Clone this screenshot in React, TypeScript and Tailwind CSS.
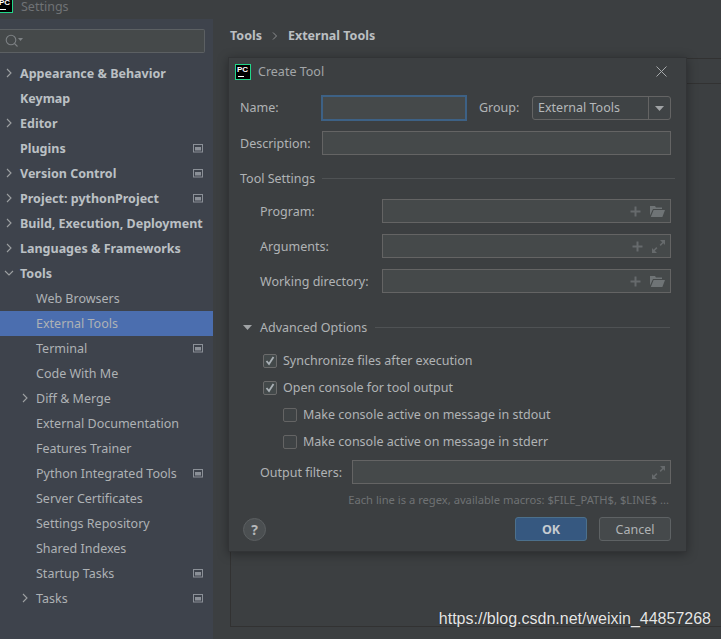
import type { ReactNode } from 'react'

const font = "font-['Noto_Sans','Open_Sans',sans-serif]"

type NavItem = {
  label: string
  bold?: boolean
  arrow?: boolean
  open?: boolean
  child?: boolean
  selected?: boolean
  project?: boolean
}

const navItems: NavItem[] = [
  { label: 'Appearance & Behavior', bold: true, arrow: true },
  { label: 'Keymap', bold: true },
  { label: 'Editor', bold: true, arrow: true },
  { label: 'Plugins', bold: true, project: true },
  { label: 'Version Control', bold: true, arrow: true, project: true },
  { label: 'Project: pythonProject', bold: true, arrow: true, project: true },
  { label: 'Build, Execution, Deployment', bold: true, arrow: true },
  { label: 'Languages & Frameworks', bold: true, arrow: true },
  { label: 'Tools', bold: true, arrow: true, open: true },
  { label: 'Web Browsers', child: true },
  { label: 'External Tools', child: true, selected: true },
  { label: 'Terminal', child: true, project: true },
  { label: 'Code With Me', child: true },
  { label: 'Diff & Merge', child: true, arrow: true },
  { label: 'External Documentation', child: true },
  { label: 'Features Trainer', child: true },
  { label: 'Python Integrated Tools', child: true, project: true },
  { label: 'Server Certificates', child: true },
  { label: 'Settings Repository', child: true },
  { label: 'Shared Indexes', child: true },
  { label: 'Startup Tasks', child: true, project: true },
  { label: 'Tasks', child: true, arrow: true, project: true },
]

const PcLogo = () => (
  <div className="relative h-4 w-4 shrink-0 border border-[#21d789] bg-black">
    <span className="absolute left-[1px] top-[0px] font-['Liberation_Sans',sans-serif] text-[8px] font-bold leading-[9px] text-white">
      PC
    </span>
    <div className="absolute bottom-[2px] left-[2px] h-[1px] w-[6px] bg-white" />
  </div>
)

const Chevron = ({ open }: { open?: boolean }) => (
  <svg width="10" height="10" viewBox="0 0 10 10" fill="none" stroke="#9da0a2" strokeWidth="1.1">
    <path d={open ? 'M1 3l4 4 4-4' : 'M3 1l4 4-4 4'} />
  </svg>
)

const ProjectIcon = () => (
  <svg width="10" height="9" viewBox="0 0 10 9" className="shrink-0">
    <rect x="0.5" y="0.5" width="9" height="7.5" fill="none" stroke="#8b9097" />
    <rect x="2" y="3" width="6" height="3.5" fill="#8b9097" />
  </svg>
)

const Plus = () => (
  <svg width="11" height="11" viewBox="0 0 11 11" fill="#666a6c">
    <rect x="4.5" y="0.5" width="2" height="10" />
    <rect x="0.5" y="4.5" width="10" height="2" />
  </svg>
)

const Folder = () => (
  <svg width="15" height="12" viewBox="0 0 15 12" fill="#6f7476">
    <path d="M0 1h5l1 1.5h6V4H3L0 10.5z" />
    <path d="M3.6 5H15l-2.6 7H0.8z" />
  </svg>
)

const Expand = () => (
  <svg width="13" height="13" viewBox="0 0 13 13" fill="#666a6c">
    <path d="M8 0h5v5l-1.7-1.7-2.6 2.6-1.1-1.1 2.6-2.6z" />
    <path d="M5 13H0V8l1.7 1.7 2.6-2.6 1.1 1.1-2.6 2.6z" />
  </svg>
)

const Field = ({ className, children }: { className: string; children?: ReactNode }) => (
  <div className={`flex h-6 items-center justify-end gap-[9px] border border-[#646464] bg-[#45494a] pr-[5px] ${className}`}>
    {children}
  </div>
)

const Check = ({ checked, label, indent }: { checked?: boolean; label: string; indent?: boolean }) => (
  <div className={`flex h-[27px] items-center gap-[6px] ${indent ? 'pl-[43px]' : 'pl-[23px]'}`}>
    <div className={`flex h-[14px] w-[14px] items-center justify-center rounded-[2px] border ${checked ? 'border-[#6b6b6b] bg-[#43494a]' : 'border-[#646464] bg-[#3f4345]'}`}>
      {checked && (
        <svg width="10" height="10" viewBox="0 0 10 10" fill="none" stroke="#a9b0b5" strokeWidth="1.8">
          <path d="M1.5 5l2.5 3 4.5-7" />
        </svg>
      )}
    </div>
    <span>{label}</span>
  </div>
)

const ToolRow = ({ label, expand, folder }: { label: string; expand?: boolean; folder?: boolean }) => (
  <div className="flex h-6 items-center pl-5">
    <span className="w-[122px]">{label}</span>
    <Field className="w-[289px]">
      <Plus />
      {folder && <Folder />}
      {expand && <Expand />}
    </Field>
  </div>
)

export default function App() {
  return (
    <div className={`relative flex h-[639px] w-[721px] flex-col overflow-hidden whitespace-nowrap bg-[#3c3f41] text-[12.5px] leading-[15px] text-[#b0b3b5] ${font}`}>
      {/* Title bar, cut off by the crop */}
      <div className="flex h-[19px] shrink-0 items-start gap-[8px] overflow-hidden">
        <div className="-ml-[3px] -mt-[3px]">
          <PcLogo />
        </div>
        <span className="text-[12.5px] leading-[13px] text-[#6f7275]">Settings</span>
      </div>

      <div className="flex min-h-0 flex-1">
        {/* Sidebar */}
        <div className="flex w-[213px] shrink-0 flex-col bg-[#3e434c]">
          <div className="mb-[8px] mt-[10px] flex h-[24px] w-[205px] items-center gap-0 rounded-r-[2px] border border-l-0 border-[#5c6063] bg-[#45494a] pl-[5px]">
            <svg width="18" height="14" viewBox="0 0 18 14" fill="none" stroke="#7d8184" strokeWidth="1.1">
              <circle cx="6" cy="6" r="4.8" />
              <path d="M9.5 9.5l3 3" />
              <path d="M13 4h5l-2.5 3z" fill="#7d8184" stroke="none" />
            </svg>
          </div>
          {navItems.map(item => (
            <div
              key={item.label}
              className={`flex h-[25px] shrink-0 items-center pr-[10px] ${item.selected ? 'bg-[#4b6eaf]' : ''} ${item.child ? 'pl-[36px]' : 'pl-[20px]'}`}
            >
              <div className="relative flex min-w-0 flex-1 items-center">
                {item.arrow && (
                  <span className="absolute -left-[16px] top-[2px]">
                    <Chevron open={item.open} />
                  </span>
                )}
                <span className={item.bold ? 'font-bold text-[#bbc0c4]' : 'text-[#aeb2b5]'}>{item.label}</span>
              </div>
              {item.project && <ProjectIcon />}
            </div>
          ))}
        </div>

        {/* Main area */}
        <div className="flex min-w-0 flex-1 flex-col pl-[17px]">
          <div className="flex h-[39px] shrink-0 items-center gap-[10px] pb-[8px] pt-[2px] font-bold text-[#bbbfc2]">
            <span>Tools</span>
            <svg width="6" height="8" viewBox="0 0 6 8" fill="none" stroke="#8c8f91">
              <path d="M1 0.5l3.5 3.5-3.5 3.5" />
            </svg>
            <span>External Tools</span>
          </div>
          <div className="mb-[12px] flex-1 border-b border-l border-t border-[#323232]">
            <div className="h-[25px] border-b border-[#323232]" />
          </div>
        </div>
      </div>

      {/* Create Tool dialog */}
      <div className="absolute left-[228px] top-[57px] flex h-[495px] w-[459px] flex-col border border-[#323436] bg-[#3c3f41] pl-[11px] pr-[15px] shadow-[0_2px_10px_rgba(0,0,0,0.35)]">
        <div className="flex h-[27px] shrink-0 items-center -ml-[5px]">
          <PcLogo />
          <span className="ml-[7px] text-[#a3a6a8]">Create Tool</span>
          <svg width="11" height="11" viewBox="0 0 11 11" stroke="#a6a9ab" strokeWidth="1" className="ml-auto mr-[4px]">
            <path d="M0.5 0.5l10 10M10.5 0.5l-10 10" />
          </svg>
        </div>

        <div className="mt-[11px] flex h-6 items-center leading-[14px]">
          <span className="w-[82px]">Name:</span>
          <div className="-mx-[1px] h-[26px] w-[146px] border-2 border-[#3d6185] bg-[#45494a]" />
          <span className="ml-[13px] w-[53px]">Group:</span>
          <div className="flex h-6 w-[139px] items-center rounded-[3px] border border-[#646464] bg-[#3f4345]">
            <span className="flex-1 pl-[5px] text-[#b5b8ba]">External Tools</span>
            <div className="flex h-full w-[22px] items-center justify-center border-l border-[#646464]">
              <svg width="9" height="5" viewBox="0 0 9 5" fill="#a0a3a5">
                <path d="M0 0h9L4.5 5z" />
              </svg>
            </div>
          </div>
        </div>

        <div className="mt-[11px] flex h-6 items-center">
          <span className="w-[82px]">Description:</span>
          <Field className="w-[349px]" />
        </div>

        <div className="mt-[15px] flex h-[16px] items-center -mr-[4px]">
          <span className="w-[82px]">Tool Settings</span>
          <div className="h-[1px] flex-1 bg-[#4f5254]" />
        </div>

        <div className="mt-[13px] flex flex-col gap-[11px]">
          <ToolRow label="Program:" folder />
          <ToolRow label="Arguments:" expand />
          <ToolRow label="Working directory:" folder />
        </div>

        <div className="mt-[26px] flex h-[16px] items-center pl-[3px] pr-[1px]">
          <svg width="9" height="5" viewBox="0 0 9 5" fill="#a0a3a5">
            <path d="M0 0h9L4.5 5z" />
          </svg>
          <span className="ml-[8px]">Advanced Options</span>
          <div className="ml-[8px] h-[1px] flex-1 bg-[#4f5254]" />
        </div>

        <div className="mt-[12px] flex flex-col">
          <Check checked label="Synchronize files after execution" />
          <Check checked label="Open console for tool output" />
          <Check indent label="Make console active on message in stdout" />
          <Check indent label="Make console active on message in stderr" />
        </div>

        <div className="mt-[5px] flex h-6 items-center pl-5">
          <span className="w-[92px]">Output filters:</span>
          <Field className="w-[319px]">
            <Expand />
          </Field>
        </div>

        <div className="mt-[8px] pr-[2px] text-right text-[11.2px] leading-[16px] text-[#6f7274]">
          Each line is a regex, available macros: $FILE_PATH$, $LINE$ ...
        </div>

        <div className="mt-[9px] flex items-center">
          <div className="ml-[3px] flex h-[23px] w-[23px] items-center justify-center rounded-full border border-[#5b5f61] bg-[#4b4f51] text-[14px] font-bold text-[#b5b8ba]">
            ?
          </div>
          <button className="ml-auto h-6 w-[72px] rounded-[3px] border border-[#4c708c] bg-[#365880] font-bold text-[#c5cbd0]">
            OK
          </button>
          <button className="ml-[12px] h-6 w-[72px] rounded-[3px] border border-[#5e6264] bg-[#45494b] text-[#b0b3b5]">
            Cancel
          </button>
        </div>
      </div>

      <div className="absolute right-[10px] top-[610px] font-['Liberation_Sans',sans-serif] text-[16px] leading-[18px] text-[#e6e6e6] [text-shadow:0_0_1px_#222]">
        https://blog.csdn.net/weixin_44857268
      </div>
    </div>
  )
}
